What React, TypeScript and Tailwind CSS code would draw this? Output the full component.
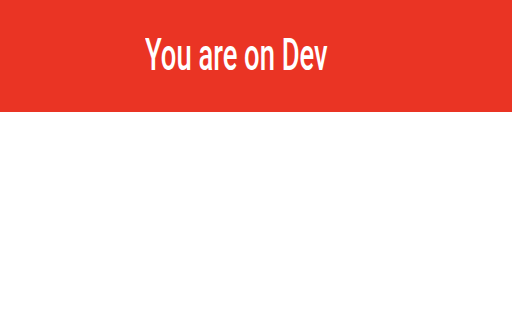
export default function App() {
  return (
    <div className="w-[512px] h-[320px] bg-white font-['Roboto',sans-serif]">
      <div className="h-[112px] bg-[#ea3424] pl-[145px] pt-[29px]">
        <div className="origin-top-left scale-y-[1.62] text-white font-medium text-[27.4px] leading-[32px] whitespace-nowrap">
          You are on Dev
        </div>
      </div>
    </div>
  )
}
